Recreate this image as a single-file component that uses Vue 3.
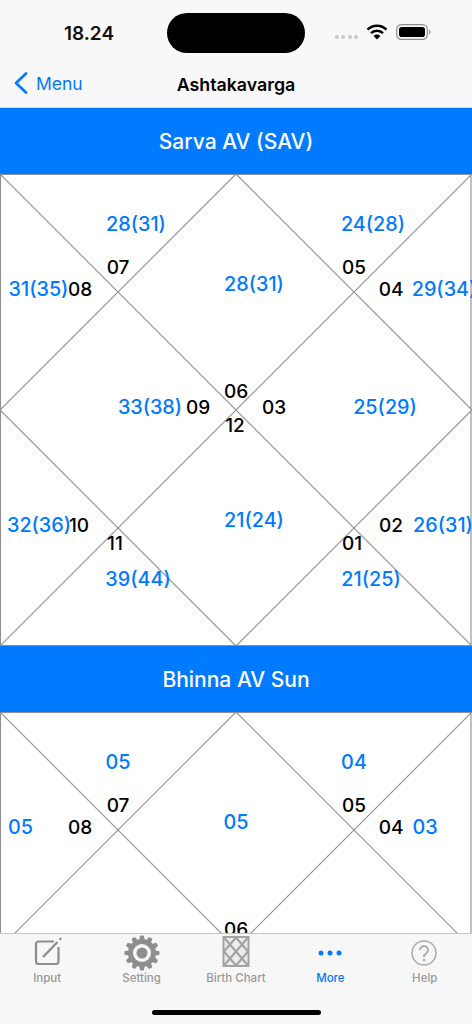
<script setup>
const sarva = [
  ['28(31)', 136, 50, 1], ['07', 118, 93, 0], ['31(35)', 38.5, 115, 1], ['08', 80, 115, 0],
  ['28(31)', 254, 110, 1], ['24(28)', 373, 50, 1], ['05', 354, 93, 0], ['04', 391, 115, 0],
  ['29(34)', 444, 115, 1], ['33(38)', 150, 233, 1], ['09', 198, 233, 0], ['06', 236, 217, 0],
  ['03', 274, 233, 0], ['12', 235, 251, 0], ['25(29)', 385, 233, 1], ['32(36)', 39, 351, 1],
  ['10', 79, 351, 0], ['11', 115, 369, 0], ['39(44)', 138, 405, 1], ['21(24)', 254, 346, 1],
  ['01', 352, 369, 0], ['02', 391, 351, 0], ['26(31)', 443, 351, 1], ['21(25)', 371, 405, 1]
]
const sun = [
  ['05', 118, 50, 1], ['07', 118, 93, 0], ['05', 20.5, 115, 1], ['08', 80, 115, 0],
  ['05', 236, 110, 1], ['04', 354, 50, 1], ['05', 354, 93, 0], ['04', 391, 115, 0],
  ['03', 425, 115, 1], ['06', 236, 217, 0]
]
const sections = [
  { title: 'Sarva AV (SAV)', labels: sarva },
  { title: 'Bhinna AV Sun', labels: sun }
]
const gear = (() => {
  const pts = []
  const n = 12
  for (let i = 0; i < n; i++) {
    const a = (i / n) * Math.PI * 2
    const s = (Math.PI * 2) / n
    const p = (r, t) => `${(18 + r * Math.cos(t)).toFixed(2)},${(18 + r * Math.sin(t)).toFixed(2)}`
    pts.push(p(14, a - s * 0.36), p(17.6, a - s * 0.2), p(17.6, a + s * 0.2), p(14, a + s * 0.36))
  }
  return pts.join(' ')
})()
</script>

<template>
  <div class="phone">
    <header class="top">
      <div class="status">
        <span class="time">18.24</span>
        <div class="island"></div>
        <div class="status-icons">
          <span class="dots"><i></i><i></i><i></i><i></i></span>
          <svg class="wifi" width="22" height="16" viewBox="0 0 22 16">
            <path d="M1.500 5.600a13.600 13.600 0 0 1 19 0" fill="none" stroke="#000" stroke-width="2.500" />
            <path d="M5 9.200a8.600 8.600 0 0 1 12 0" fill="none" stroke="#000" stroke-width="2.500" />
            <path d="M7.600 12a4.800 4.800 0 0 1 6.800 0L11 15.600z" fill="#000" />
          </svg>
          <svg class="battery" width="35" height="16" viewBox="0 0 35 16">
            <rect x="0.700" y="0.700" width="30.600" height="14.600" rx="4.600" fill="none" stroke="#8e8e8e" stroke-width="1.200" />
            <rect x="3" y="3" width="26" height="10" rx="2.800" fill="#000" />
            <path d="M33 5.500c1 .4 1.600 1.300 1.600 2.500s-.6 2.100-1.600 2.500z" fill="#9a9a9a" />
          </svg>
        </div>
      </div>
      <nav class="navbar">
        <div class="back">
          <svg width="16" height="24" viewBox="0 0 16 24">
            <path d="M13 2.500 3 12l10 9.500" fill="none" stroke="#007aff" stroke-width="2.700" stroke-linecap="round" stroke-linejoin="round" />
          </svg>
          <span>Menu</span>
        </div>
        <h1>Ashtakavarga</h1>
      </nav>
    </header>

    <main class="content">
      <section v-for="s in sections" :key="s.title">
        <h2 class="band">{{ s.title }}</h2>
        <div class="chart">
          <svg class="lines" width="472" height="472" viewBox="0 0 472 472">
            <path d="M.5 0V472M471 0V472M0 .5H472M0 471.500H472M0 0 472 472M472 0 0 472M236 0 472 236 236 472 0 236Z" fill="none" stroke="#8f8f8f" stroke-width="1.100" />
          </svg>
          <span
            v-for="(l, i) in s.labels"
            :key="i"
            class="label"
            :class="l[3] ? 'value' : 'house'"
            :style="{ left: l[1] + 'px', top: l[2] + 'px' }"
          >{{ l[0] }}</span>
        </div>
      </section>
    </main>

    <footer class="tabbar">
      <div class="tabs">
        <div class="tab">
          <svg class="icon" width="36" height="36" viewBox="0 0 36 36">
            <path d="M25 6.500H9.500A2.500 2.500 0 0 0 7 9v17.500A2.500 2.500 0 0 0 9.500 29h17.500a2.500 2.500 0 0 0 2.500-2.500V12" fill="none" stroke="#8e8e8e" stroke-width="2.200" />
            <path d="M14 22 28.500 7" stroke="#8e8e8e" stroke-width="2.400" fill="none" />
            <path d="M30.500 4.800 32.300 3" stroke="#8e8e8e" stroke-width="2" fill="none" />
          </svg>
          <span>Input</span>
        </div>
        <div class="tab">
          <svg class="icon" width="36" height="36" viewBox="0 0 36 36">
            <polygon :points="gear" fill="#8e8e8e" />
            <circle cx="18" cy="18" r="9" fill="#f7f7f7" />
            <circle cx="18" cy="18" r="5.500" fill="#8e8e8e" />
          </svg>
          <span>Setting</span>
        </div>
        <div class="tab">
          <svg class="icon" width="36" height="36" viewBox="0 0 36 36">
            <rect x="5.500" y="2" width="25" height="29" fill="#ececec" stroke="#a3a3a3" stroke-width="2" />
            <path d="M6 2.500 18 16.500 30 30.500M30 2.500 18 16.500 6 30.500M18 2.500 24 9.500 30 16.500 24 23.500 18 30.500 12 23.500 6 16.500 12 9.500Z" fill="none" stroke="#a3a3a3" stroke-width="2.200" stroke-linejoin="round" />
          </svg>
          <span>Birth Chart</span>
        </div>
        <div class="tab active">
          <svg class="icon" width="36" height="36" viewBox="0 0 36 36">
            <circle cx="9" cy="18" r="2.500" fill="#007aff" />
            <circle cx="18" cy="18" r="2.500" fill="#007aff" />
            <circle cx="27" cy="18" r="2.500" fill="#007aff" />
          </svg>
          <span>More</span>
        </div>
        <div class="tab">
          <svg class="icon" width="36" height="36" viewBox="0 0 36 36">
            <circle cx="17" cy="18" r="12" fill="none" stroke="#adadad" stroke-width="1.600" />
            <path d="M13 15a4 4 0 1 1 6.300 3.300c-1.500 1-2.300 1.800-2.300 3.700" fill="none" stroke="#adadad" stroke-width="2" />
            <circle cx="17" cy="25" r="1.300" fill="#adadad" />
          </svg>
          <span>Help</span>
        </div>
      </div>
      <div class="home"></div>
    </footer>
  </div>
</template>

<style scoped>
.phone {
  width: 472px;
  height: 1024px;
  display: flex;
  flex-direction: column;
  overflow: hidden;
  background: #fff;
  font-family: Inter, "Liberation Sans", sans-serif;
}
.top {
  height: 108px;
  flex: none;
  box-sizing: border-box;
  background: #f8f8f8;
  border-bottom: 1px solid #dcdcdc;
}
.status {
  height: 66px;
  display: flex;
  align-items: center;
  position: relative;
}
.time {
  margin-left: 64px;
  font-size: 19px;
  font-weight: 600;
  color: #111;
}
.island {
  position: absolute;
  left: 167px;
  top: 13px;
  width: 138px;
  height: 40px;
  border-radius: 20px;
  background: #000;
}
.status-icons {
  position: absolute;
  left: 335px;
  top: 24px;
  display: flex;
  align-items: center;
}
.dots {
  display: flex;
  gap: 2.300px;
  margin-right: 8px;
  margin-top: 10px;
}
.dots i {
  width: 4px;
  height: 4px;
  border-radius: 50%;
  background: #c9c9c9;
}
.wifi {
  margin-right: 8px;
}
.navbar {
  height: 41px;
  box-sizing: border-box;
  padding-bottom: 5px;
  position: relative;
  display: flex;
  align-items: center;
  justify-content: center;
}
.navbar h1 {
  margin: 0;
  font-size: 17.800px;
  font-weight: 600;
  color: #000;
}
.back {
  position: absolute;
  left: 13px;
  top: 5px;
  display: flex;
  align-items: center;
  gap: 7px;
  color: #007aff;
  font-size: 17.500px;
}
.content {
  flex: 1;
  min-height: 0;
  overflow: hidden;
}
.band {
  margin: 0;
  height: 66px;
  display: flex;
  align-items: center;
  justify-content: center;
  background: #007aff;
  color: #fff;
  font-size: 21px;
  font-weight: 500;
}
.chart {
  position: relative;
  width: 472px;
  height: 472px;
  overflow: hidden;
  background: #fff;
}
.lines {
  position: absolute;
  left: 0;
  top: 0;
}
.label {
  position: absolute;
  transform: translate(-50%, -50%);
  font-size: 19px;
  font-weight: 500;
  line-height: 24px;
  white-space: nowrap;
}
.value {
  color: #007aff;
  font-size: 19.800px;
}
.house {
  color: #000;
  margin-top: 1px;
}
.tabbar {
  height: 91px;
  flex: none;
  position: relative;
  background: #f7f7f7;
  border-top: 1px solid #c8c8c8;
  box-sizing: border-box;
}
.tabs {
  display: grid;
  grid-template-columns: repeat(5, 94.400px);
}
.tab {
  display: flex;
  flex-direction: column;
  align-items: center;
  color: #999;
  font-size: 11.500px;
  font-weight: 500;
}
.tab.active {
  color: #007aff;
}
.icon {
  display: block;
  margin-top: 1px;
}
.home {
  position: absolute;
  left: 152px;
  top: 76px;
  width: 169px;
  height: 5px;
  border-radius: 3px;
  background: #000;
}
</style>
